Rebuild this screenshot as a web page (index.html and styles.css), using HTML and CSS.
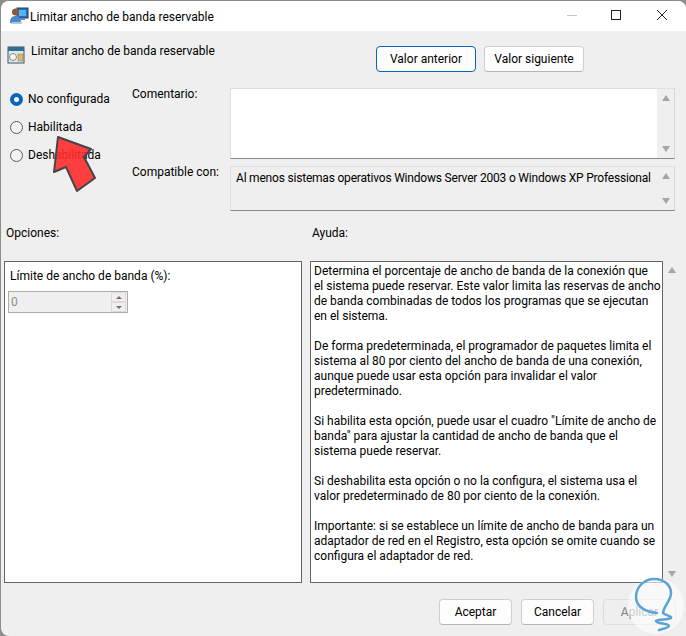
FILE: index.html
```html
<!DOCTYPE html>
<html lang="es">
<head>
<meta charset="utf-8">
<title>Limitar ancho de banda reservable</title>
<link rel="stylesheet" href="styles.css">
</head>
<body>
<div class="window">
  <header class="titlebar">
    <svg class="title-icon" width="20" height="20" viewBox="0 0 20 20">
      <rect x="8" y="2" width="11" height="10" fill="#1f6fc4" stroke="#26415f"/>
      <rect x="10" y="4" width="7" height="6" fill="#58b4ee"/>
      <rect x="11" y="12" width="5" height="2" fill="#7c8894"/>
      <circle cx="6.500" cy="6" r="3.500" fill="#8a5a38"/>
      <path d="M1 17c0-5 2-7 5.500-7s5.500 2 5.500 7z" fill="#4e88c8"/>
      <path d="M2 18h10l2-2H3z" fill="#a9c8e6"/>
    </svg>
    <span class="title-text">Limitar ancho de banda reservable</span>
    <div class="controls">
      <span class="ctl ctl-min"></span>
      <svg class="ctl-svg" width="46" height="16" viewBox="0 0 46 16"><rect x="18.500" y="3.500" width="9" height="9" fill="none" stroke="#222" stroke-width="1"/></svg>
      <svg class="ctl-svg" width="46" height="16" viewBox="0 0 46 16"><path d="M18 3l10 10M28 3L18 13" fill="none" stroke="#222" stroke-width="1"/></svg>
    </div>
  </header>

  <main class="content">
    <section class="head">
      <div class="policy">
        <svg width="18" height="18" viewBox="0 0 18 18">
          <rect x="1" y="1" width="16" height="16" fill="#dfe8ee" stroke="#3d5666"/>
          <rect x="1" y="1" width="16" height="4" fill="#2f6f8f"/>
          <circle cx="6" cy="11" r="3.500" fill="#f4f4f4" stroke="#7a9a6a"/>
          <rect x="11" y="8" width="5" height="7" fill="#d9b872" stroke="#8a7440" stroke-width=".5"/>
        </svg>
        <span class="policy-name">Limitar ancho de banda reservable</span>
      </div>
      <div class="nav">
        <button class="btn btn-primary">Valor anterior</button>
        <button class="btn">Valor siguiente</button>
      </div>
    </section>

    <section class="settings">
      <div class="radios">
        <label class="radio"><span class="dot dot-on"></span>No configurada</label>
        <label class="radio"><span class="dot"></span>Habilitada</label>
        <label class="radio"><span class="dot"></span>Deshabilitada</label>
      </div>
      <div class="field-labels">
        <span class="lbl-comment">Comentario:</span>
        <span class="lbl-compat">Compatible con:</span>
      </div>
      <div class="boxes">
        <div class="box box-comment">
          <div class="box-body"></div>
          <div class="scroll"><i class="up"></i><i class="down"></i></div>
        </div>
        <div class="box box-compat">
          <div class="box-body box-body-gray">Al menos sistemas operativos Windows Server 2003 o Windows XP Professional</div>
          <div class="scroll"><i class="up"></i><i class="down"></i></div>
        </div>
      </div>
    </section>

    <section class="panels">
      <div class="col-left">
        <div class="panel-label">Opciones:</div>
        <div class="panel panel-options">
          <div class="opt-label">Límite de ancho de banda (%):</div>
          <div class="spin">
            <span class="spin-value">0</span>
            <span class="spin-btns"><span class="spin-btn"><i class="up-s"></i></span><span class="spin-btn"><i class="down-s"></i></span></span>
          </div>
        </div>
      </div>
      <div class="col-right">
        <div class="panel-label panel-label-help">Ayuda:</div>
        <div class="help-wrap">
          <div class="panel panel-help">
            <p>Determina el porcentaje de ancho de banda de la conexión que<br>el sistema puede reservar. Este valor limita las reservas de ancho<br>de banda combinadas de todos los programas que se ejecutan<br>en el sistema.</p>
            <p>De forma predeterminada, el programador de paquetes limita el<br>sistema al 80 por ciento del ancho de banda de una conexión,<br>aunque puede usar esta opción para invalidar el valor<br>predeterminado.</p>
            <p>Si habilita esta opción, puede usar el cuadro "Límite de ancho de<br>banda" para ajustar la cantidad de ancho de banda que el<br>sistema puede reservar.</p>
            <p>Si deshabilita esta opción o no la configura, el sistema usa el<br>valor predeterminado de 80 por ciento de la conexión.</p>
            <p>Importante: si se establece un límite de ancho de banda para un<br>adaptador de red en el Registro, esta opción se omite cuando se<br>configura el adaptador de red.</p>
          </div>
          <div class="scroll scroll-help"><i class="up"></i><i class="down"></i></div>
        </div>
      </div>
    </section>

    <footer class="footer">
      <button class="btn btn-foot">Aceptar</button>
      <button class="btn btn-foot">Cancelar</button>
      <button class="btn btn-foot btn-disabled">Aplicar</button>
    </footer>
  </main>

  <svg class="arrow" width="50" height="62" viewBox="0 0 50 62">
    <path d="M6 2L39 14L32 22L43 43L25 56L14 32L2 37Z" fill="#ff2b2b" fill-opacity=".9" stroke="#45454a" stroke-width="2" stroke-linejoin="round"/>
  </svg>
  <svg class="mark" width="60" height="60" viewBox="0 0 60 60">
    <circle cx="30" cy="31" r="28" fill="#fff" fill-opacity=".6"/>
    <path d="M31 38C20 37 10 32 10 22C10 11 19 4 28 4C38 4 45 10 45 18C45 26 38 30 37 38C41 41 46 41 45 43C43 45 31 44 30 46C31 49 43 48 43 51C42 53 36 54 33 55" fill="none" stroke="#5aa5d6" stroke-width="2.500" stroke-linecap="round" stroke-linejoin="round"/>
  </svg>
</div>
</body>
</html>
```
FILE: styles.css
```css
* { box-sizing: border-box; }
html, body { margin: 0; padding: 0; }
body {
  width: 686px;
  height: 636px;
  background: #8d8d8d;
  overflow: hidden;
  font-family: Roboto, "Open Sans", "Liberation Sans", sans-serif;
  font-size: 12px;
  color: #000;
}
.window {
  position: relative;
  width: 685px;
  height: 635px;
  margin-left: 1px;
  margin-top: 1px;
  background: #efefef;
  border-radius: 8px 8px 0 8px;
  overflow: hidden;
  display: flex;
  flex-direction: column;
}
.titlebar {
  height: 30px;
  background: #fff;
  display: flex;
  align-items: center;
  padding-left: 8px;
  flex: none;
}
.title-icon { margin-right: 1px; }
.title-text { flex: 1; padding-top: 1px; }
.controls { display: flex; align-items: center; margin: -2px 1px 0 0; }
.ctl-svg { display: block; }
.ctl { display: block; }
.ctl-min { width: 10px; height: 1px; background: #c4c4c4; margin-right: 16px; }

.content { flex: 1; display: flex; flex-direction: column; padding: 15px 0 0 0; }
.head { display: flex; justify-content: space-between; height: 27px; padding-right: 102px; }
.policy { display: flex; align-items: flex-start; padding-left: 6px; gap: 6px; }
.policy-name { line-height: 16px; margin-top: -3px; }
.nav { display: flex; gap: 8px; }
.btn {
  font: inherit;
  color: #000;
  width: 100px;
  height: 26px;
  background: #fdfdfd;
  border: 1px solid #cfcfcf;
  border-bottom-color: #b5b5b5;
  border-radius: 4px;
  padding: 0;
}
.btn-primary { border-color: #0a66b8; }

.settings {
  display: grid;
  grid-template-columns: 130px 99px 445px;
  margin-top: 15px;
  height: 123px;
}
.radios { display: flex; flex-direction: column; padding: 3px 0 0 9px; gap: 12px; }
.radio { display: flex; align-items: center; height: 16px; gap: 5px; }
.dot { width: 13px; height: 13px; border-radius: 50%; border: 1px solid #5b5b5b; background: #f3f3f3; flex: none; }
.dot-on { border: 4px solid #0a66b8; background: #fff; }
.field-labels { display: flex; flex-direction: column; padding: 0 0 0 1px; }
.lbl-comment { line-height: 16px; margin-top: -2px; }
.lbl-compat { line-height: 16px; margin-top: 62px; }
.boxes { display: flex; flex-direction: column; gap: 7px; min-width: 0; }
.box { display: flex; border: 1px solid #dedede; border-bottom: 1px solid #8a8a8a; border-right-color: #d8d8d8; }
.box-comment { height: 71px; }
.box-compat { height: 45px; }
.box-body { flex: 1; min-width: 0; background: #fff; }
.box-body-gray { background: #efefef; padding: 3px 5px; line-height: 16px; white-space: nowrap; letter-spacing: -.2px; }
.scroll {
  width: 17px;
  flex: none;
  display: flex;
  flex-direction: column;
  justify-content: space-between;
  align-items: center;
  padding: 6px 0;
  background: #efefef;
}
.up { display: block; width: 0; height: 0; border-left: 4px solid transparent; border-right: 4px solid transparent; border-bottom: 6px solid #a6a6a6; }
.down { display: block; width: 0; height: 0; border-left: 4px solid transparent; border-right: 4px solid transparent; border-top: 6px solid #a6a6a6; }

.panels {
  display: grid;
  grid-template-columns: 306px 1fr;
  margin-top: 13px;
  padding-left: 3px;
}
.panel-label { height: 37px; padding: 0 0 0 2px; line-height: 18px; }
.panel-label-help { padding-left: 2px; }
.panel { background: #fff; border: 1px solid #666; height: 322px; }
.panel-options { width: 298px; padding: 6px 5px; }
.opt-label { line-height: 16px; margin-bottom: 7px; }
.spin {
  width: 120px;
  height: 22px;
  margin-left: -2px;
  background: #efefef;
  border: 1px solid #adadad;
  display: flex;
  justify-content: space-between;
  color: #8e8e8e;
}
.spin-value { padding-left: 2px; line-height: 20px; }
.spin-btns { width: 15px; display: flex; flex-direction: column; margin-right: 1px; }
.spin-btn { flex: 1; border: 1px solid #e4d8e0; display: flex; align-items: center; justify-content: center; }
.up-s { width: 0; height: 0; border-left: 3px solid transparent; border-right: 3px solid transparent; border-bottom: 3px solid #707070; }
.down-s { width: 0; height: 0; border-left: 3px solid transparent; border-right: 3px solid transparent; border-top: 3px solid #707070; }
.help-wrap { display: flex; }
.panel-help { width: 353px; padding: 2px 3px; line-height: 15px; white-space: nowrap; }
.panel-help p { margin: 0 0 15px; }
.scroll-help { height: 322px; }

.footer {
  display: flex;
  justify-content: flex-end;
  gap: 9px;
  margin-top: 16px;
  padding-right: 10px;
}
.btn-foot { width: 73px; }
.btn-disabled { background: #efefef; color: #808080; border-color: #dcdcdc; }

.arrow { position: absolute; left: 51px; top: 134px; }
.mark { position: absolute; left: 625px; top: 574px; }
```
